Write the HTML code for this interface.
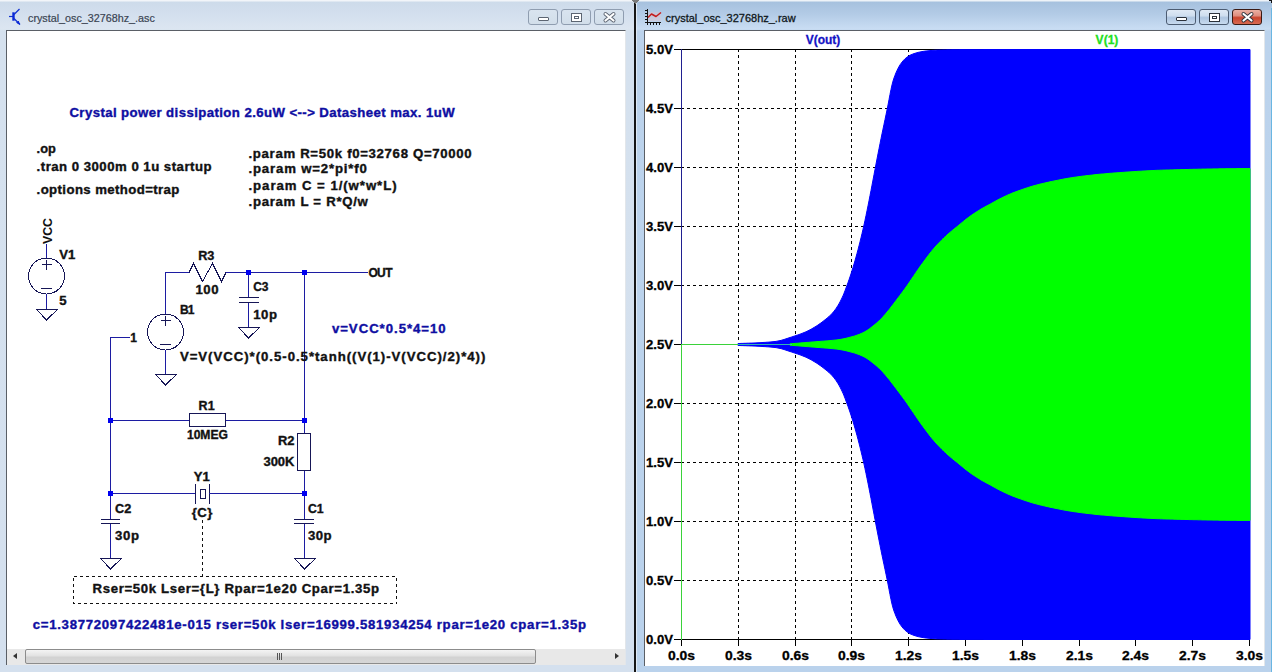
<!DOCTYPE html>
<html><head><meta charset="utf-8"><style>
html,body{margin:0;padding:0;width:1272px;height:672px;overflow:hidden;background:#c7d7e9;font-family:"Liberation Sans", sans-serif;}
.abs{position:absolute}
svg text{font-family:"Liberation Sans", sans-serif;font-weight:bold}
</style></head><body>
<div class="abs" style="left:0;top:0;width:634px;height:672px;background:linear-gradient(#f2f5f9 0px,#f2f5f9 1px,#cddbea 2px,#d3dfee 14px,#dce6f1 29px,#d5e1ee 31px,#d4e0ee 100%)"></div>
<div class="abs" style="left:636px;top:0;width:636px;height:672px;background:linear-gradient(#eef3f8 0px,#eef3f8 1px,#a6c1de 2px,#b3cbe6 14px,#c9ddf3 29px,#bcd3ec 31px,#bad2ec 100%)"></div>
<div class="abs" style="left:1271px;top:8px;width:1px;height:664px;background:#6ab6e2"></div>
<div class="abs" style="left:636px;top:0;width:1px;height:672px;background:#dfe9f4"></div>
<div class="abs" style="left:634px;top:0;width:2px;height:672px;background:#151515"></div>
<div class="abs" style="left:6px;top:30px;width:620px;height:635px;background:#fff;border-left:1px solid #5a5f66;border-top:1px solid #5a5f66;border-right:1px solid #e2e6ea;box-sizing:border-box"></div>
<div class="abs" style="left:644px;top:30px;width:621px;height:636px;background:#fff;border-left:1px solid #5a5f66;border-top:1px solid #5a5f66;border-right:1px solid #e2e6ea;box-sizing:border-box"></div>
<!-- scrollbar -->
<div class="abs" style="left:7px;top:649px;width:618px;height:16px;background:#e8e8e8"></div>
<div class="abs" style="left:25px;top:649px;width:511px;height:15px;border:1px solid #8c8c8c;border-radius:2px;background:linear-gradient(#f4f4f4,#e2e2e2 45%,#d2d2d2 55%,#d6d6d6);box-sizing:border-box"></div>
<div class="abs" style="left:277px;top:653px;width:1px;height:7px;background:#555"></div>
<div class="abs" style="left:279px;top:653px;width:1px;height:7px;background:#555"></div>
<div class="abs" style="left:281px;top:653px;width:1px;height:7px;background:#555"></div>
<div class="abs" style="left:13px;top:653px;width:0;height:0;border-top:3.5px solid transparent;border-bottom:3.5px solid transparent;border-right:4px solid #333"></div>
<div class="abs" style="left:615px;top:653px;width:0;height:0;border-top:3.5px solid transparent;border-bottom:3.5px solid transparent;border-left:4px solid #333"></div>
<!-- titles -->


<div style="position:absolute;left:528px;top:9px;border:1px solid #8f9db0;border-radius:3px;background:linear-gradient(#d9e4ef 0%,#d2deea 100%);box-sizing:border-box;width:30px;height:16px"><div style="position:absolute;left:9px;top:7px;width:9px;height:2px;background:#fff;border:1px solid #5c6572;border-radius:1px"></div></div><div style="position:absolute;left:561px;top:9px;border:1px solid #8f9db0;border-radius:3px;background:linear-gradient(#d9e4ef 0%,#d2deea 100%);box-sizing:border-box;width:30px;height:16px"><div style="position:absolute;left:9px;top:3px;width:9px;height:7px;background:#fff;border:1px solid #5c6572;"><div style="position:absolute;left:2px;top:2px;width:5px;height:3px;background:#5c6572"></div><div style="position:absolute;left:3px;top:3px;width:3px;height:1px;background:#fff"></div></div></div><div style="position:absolute;left:594px;top:9px;border:1px solid #8f9db0;border-radius:3px;background:linear-gradient(#d9e4ef 0%,#d2deea 100%);box-sizing:border-box;width:30px;height:16px"><svg style="position:absolute;left:0;top:0" width="30" height="16"><g stroke-linecap="round"><path d="M10.5,4 L18.5,10.5 M18.5,4 L10.5,10.5" stroke="#5c6572" stroke-width="4"/><path d="M10.5,4 L18.5,10.5 M18.5,4 L10.5,10.5" stroke="#fff" stroke-width="2.2"/></g></svg></div>
<div style="position:absolute;left:1166px;top:9px;border:1px solid #4c5c72;border-radius:3px;background:linear-gradient(#dfe9f5 0%,#cfdeef 40%,#aec5e0 55%,#c8dbef 100%);box-sizing:border-box;width:30px;height:16px"><div style="position:absolute;left:9px;top:7px;width:9px;height:2px;background:#fff;border:1px solid #2c323c;border-radius:1px"></div></div><div style="position:absolute;left:1199px;top:9px;border:1px solid #4c5c72;border-radius:3px;background:linear-gradient(#dfe9f5 0%,#cfdeef 40%,#aec5e0 55%,#c8dbef 100%);box-sizing:border-box;width:30px;height:16px"><div style="position:absolute;left:9px;top:3px;width:9px;height:7px;background:#fff;border:1px solid #2c323c;"><div style="position:absolute;left:2px;top:2px;width:5px;height:3px;background:#2c323c"></div><div style="position:absolute;left:3px;top:3px;width:3px;height:1px;background:#fff"></div></div></div><div style="position:absolute;left:1232px;top:9px;border:1px solid #3a1a14;border-radius:3px;background:linear-gradient(#eab0a4 0%,#df8e80 40%,#c9442e 55%,#d86a52 100%);box-sizing:border-box;width:30px;height:16px"><svg style="position:absolute;left:0;top:0" width="30" height="16"><g stroke-linecap="round"><path d="M10.5,4 L18.5,10.5 M18.5,4 L10.5,10.5" stroke="#2c323c" stroke-width="4"/><path d="M10.5,4 L18.5,10.5 M18.5,4 L10.5,10.5" stroke="#fff" stroke-width="2.2"/></g></svg></div>
<svg class="abs" style="left:0;top:0" width="1272" height="672" viewBox="0 0 1272 672" shape-rendering="crispEdges">
<!-- icons -->
<g fill="none" shape-rendering="auto"><line x1="9" y1="16.5" x2="13" y2="16.5" stroke="#1030d0" stroke-width="1.2"/><rect x="12.3" y="12.3" width="2.4" height="8.4" fill="#0a28d8"/><line x1="14" y1="14.5" x2="19.5" y2="9" stroke="#1030d0" stroke-width="1.2"/><line x1="14" y1="18.5" x2="20" y2="24.5" stroke="#1030d0" stroke-width="1.2"/><path d="M16.5,22.5 L19.5,24.2 L18.2,21" fill="#0a28d8" stroke="#0a28d8" stroke-width="1"/></g>
<rect x="648" y="12" width="13" height="9" fill="#e8c0c4" opacity="0.35"/>
<g fill="#111"><rect x="647" y="9" width="1" height="15"/><rect x="645" y="22" width="16" height="1"/>
<rect x="645" y="10" width="2" height="1"/><rect x="645" y="13" width="2" height="1"/><rect x="645" y="16" width="2" height="1"/><rect x="645" y="19" width="2" height="1"/>
<rect x="650" y="23" width="1" height="2"/><rect x="653" y="23" width="1" height="2"/><rect x="656" y="23" width="1" height="2"/><rect x="659" y="23" width="1" height="2"/><rect x="647" y="23" width="1" height="2"/></g>
<polyline points="648,17.5 651.5,14 656,16.5 661,12.5" stroke="#c41c1c" stroke-width="1.5" fill="none" shape-rendering="auto" stroke-linejoin="round"/>
<polygon points="631,0 639,0 635,4" fill="#7a7a7a"/>
<rect x="1269" y="0" width="3" height="1" fill="#111"/><rect x="1271" y="1" width="1" height="2" fill="#111"/>
</svg>
<svg class="abs" style="left:0;top:0" width="1272" height="672" viewBox="0 0 1272 672">
<defs><clipPath id="cl"><rect x="7" y="31" width="618" height="618"/></clipPath></defs>
<g clip-path="url(#cl)" shape-rendering="crispEdges">
<line x1="46.5" y1="244" x2="46.5" y2="258" stroke="#1c1ca2" stroke-width="1" /><circle cx="46.5" cy="276" r="18" stroke="#161656" fill="none" stroke-width="1"/><line x1="42" y1="264.5" x2="52" y2="264.5" stroke="#161656" stroke-width="1" /><line x1="46.5" y1="260" x2="46.5" y2="270" stroke="#161656" stroke-width="1" /><line x1="41" y1="288.5" x2="52" y2="288.5" stroke="#161656" stroke-width="1" /><line x1="46.5" y1="294" x2="46.5" y2="309" stroke="#1c1ca2" stroke-width="1" /><polygon points="36.5,309.5 57.5,309.5 46.5,320" stroke="#161656" fill="none" stroke-width="1"/><line x1="165.5" y1="272" x2="165.5" y2="314" stroke="#1c1ca2" stroke-width="1" /><circle cx="165.5" cy="332" r="18" stroke="#161656" fill="none" stroke-width="1"/><line x1="161" y1="320.5" x2="171" y2="320.5" stroke="#161656" stroke-width="1" /><line x1="165.5" y1="316" x2="165.5" y2="326" stroke="#161656" stroke-width="1" /><line x1="160" y1="344.5" x2="171" y2="344.5" stroke="#161656" stroke-width="1" /><line x1="165.5" y1="350" x2="165.5" y2="374" stroke="#1c1ca2" stroke-width="1" /><polygon points="155.5,374.5 176.5,374.5 165.5,385" stroke="#161656" fill="none" stroke-width="1"/><line x1="165" y1="272.5" x2="189" y2="272.5" stroke="#1c1ca2" stroke-width="1" /><polyline points="189,272.5 193.5,263.5 202.5,281.5 212.5,263.5 221.5,281.5 226,272.5" stroke="#161656" fill="none" stroke-width="1"/><line x1="226" y1="272.5" x2="368" y2="272.5" stroke="#1c1ca2" stroke-width="1" /><line x1="248.5" y1="272" x2="248.5" y2="297" stroke="#1c1ca2" stroke-width="1" /><line x1="239" y1="297.5" x2="259" y2="297.5" stroke="#161656" stroke-width="1" /><line x1="239" y1="302.5" x2="259" y2="302.5" stroke="#161656" stroke-width="1" /><line x1="248.5" y1="303" x2="248.5" y2="327" stroke="#1c1ca2" stroke-width="1" /><polygon points="238.5,327.5 259.5,327.5 248.5,338" stroke="#161656" fill="none" stroke-width="1"/><line x1="304.5" y1="272" x2="304.5" y2="433" stroke="#1c1ca2" stroke-width="1" /><rect x="297.5" y="433.5" width="13" height="37" stroke="#161656" fill="none"/><line x1="304.5" y1="471" x2="304.5" y2="519" stroke="#1c1ca2" stroke-width="1" /><line x1="294" y1="519.5" x2="314" y2="519.5" stroke="#161656" stroke-width="1" /><line x1="294" y1="523.5" x2="314" y2="523.5" stroke="#161656" stroke-width="1" /><line x1="304.5" y1="524" x2="304.5" y2="558" stroke="#1c1ca2" stroke-width="1" /><polygon points="294.5,558.5 315.5,558.5 304.5,569" stroke="#161656" fill="none" stroke-width="1"/><line x1="110" y1="337.5" x2="130" y2="337.5" stroke="#1c1ca2" stroke-width="1" /><line x1="110.5" y1="337" x2="110.5" y2="519" stroke="#1c1ca2" stroke-width="1" /><line x1="101" y1="519.5" x2="120" y2="519.5" stroke="#161656" stroke-width="1" /><line x1="101" y1="523.5" x2="120" y2="523.5" stroke="#161656" stroke-width="1" /><line x1="110.5" y1="524" x2="110.5" y2="558" stroke="#1c1ca2" stroke-width="1" /><polygon points="100.5,558.5 121.5,558.5 110.5,569" stroke="#161656" fill="none" stroke-width="1"/><line x1="110" y1="420.5" x2="189" y2="420.5" stroke="#1c1ca2" stroke-width="1" /><rect x="189.5" y="413.5" width="36" height="13" stroke="#161656" fill="none"/><line x1="226" y1="420.5" x2="304" y2="420.5" stroke="#1c1ca2" stroke-width="1" /><line x1="110" y1="493.5" x2="195" y2="493.5" stroke="#1c1ca2" stroke-width="1" /><line x1="195.5" y1="484" x2="195.5" y2="504" stroke="#161656" stroke-width="1" /><line x1="209.5" y1="484" x2="209.5" y2="504" stroke="#161656" stroke-width="1" /><rect x="200.5" y="489.5" width="5" height="9" stroke="#161656" fill="none"/><line x1="209" y1="493.5" x2="304" y2="493.5" stroke="#1c1ca2" stroke-width="1" /><rect x="246" y="270" width="5" height="5" fill="#0000f0"/><rect x="302" y="270" width="5" height="5" fill="#0000f0"/><rect x="108" y="418" width="5" height="5" fill="#0000f0"/><rect x="302" y="418" width="5" height="5" fill="#0000f0"/><rect x="108" y="491" width="5" height="5" fill="#0000f0"/><rect x="302" y="491" width="5" height="5" fill="#0000f0"/><line x1="202.5" y1="520" x2="202.5" y2="576" stroke="#111" stroke-width="1" stroke-dasharray="3,3"/><rect x="73.5" y="576.5" width="323" height="27" stroke="#111" fill="none" stroke-dasharray="3,3"/><text transform="translate(69.4,116.6) scale(1.1000,1)" fill="#0e0ea2" stroke="#0e0ea2" stroke-width="0.35" font-size="12" text-anchor="start" textLength="350.27" lengthAdjust="spacing" >Crystal power dissipation 2.6uW &lt;--&gt; Datasheet max. 1uW</text><text transform="translate(36.6,153.1) scale(1.0670,1)" fill="#111111" stroke="#111111" stroke-width="0.35" font-size="12" text-anchor="start" textLength="17.99" lengthAdjust="spacing" >.op</text><text transform="translate(36.6,171.1) scale(1.1000,1)" fill="#111111" stroke="#111111" stroke-width="0.35" font-size="12" text-anchor="start" textLength="159.00" lengthAdjust="spacing" >.tran 0 3000m 0 1u startup</text><text transform="translate(36.6,194.1) scale(1.1000,1)" fill="#111111" stroke="#111111" stroke-width="0.35" font-size="12" text-anchor="start" textLength="129.82" lengthAdjust="spacing" >.options method=trap</text><text transform="translate(248.5,157.6) scale(1.1000,1)" fill="#111111" stroke="#111111" stroke-width="0.35" font-size="12" text-anchor="start" textLength="202.91" lengthAdjust="spacing" >.param R=50k f0=32768 Q=70000</text><text transform="translate(248.5,173.29999999999998) scale(1.1000,1)" fill="#111111" stroke="#111111" stroke-width="0.35" font-size="12" text-anchor="start" textLength="107.55" lengthAdjust="spacing" >.param w=2*pi*f0</text><text transform="translate(248.5,189.9) scale(1.1000,1)" fill="#111111" stroke="#111111" stroke-width="0.35" font-size="12" text-anchor="start" textLength="134.64" lengthAdjust="spacing" >.param C = 1/(w*w*L)</text><text transform="translate(248.5,206.0) scale(1.1000,1)" fill="#111111" stroke="#111111" stroke-width="0.35" font-size="12" text-anchor="start" textLength="108.55" lengthAdjust="spacing" >.param L = R*Q/w</text><text x="0" y="0" fill="#111111" font-size="12" textLength="26" lengthAdjust="spacingAndGlyphs" transform="translate(51.5,244) rotate(-90)">VCC</text><text transform="translate(59.3,259.20000000000005) scale(1.0969,1)" fill="#111111" stroke="#111111" stroke-width="0.35" font-size="12" text-anchor="start" textLength="14.68" lengthAdjust="spacing" >V1</text><text transform="translate(59.3,304.6) scale(1.1000,1)" fill="#111111" stroke="#111111" stroke-width="0.35" font-size="12" text-anchor="start" textLength="6.82" lengthAdjust="spacing" >5</text><text transform="translate(198.2,260.3) scale(1.0561,1)" fill="#111111" stroke="#111111" stroke-width="0.35" font-size="12" text-anchor="start" textLength="15.34" lengthAdjust="spacing" >R3</text><text transform="translate(195.4,294.20000000000005) scale(1.1000,1)" fill="#111111" stroke="#111111" stroke-width="0.35" font-size="12" text-anchor="start" textLength="21.18" lengthAdjust="spacing" >100</text><text transform="translate(253.2,291.1) scale(1.0000,1)" fill="#111111" stroke="#111111" stroke-width="0.35" font-size="12" text-anchor="start" textLength="15.30" lengthAdjust="spacing" >C3</text><text transform="translate(253.2,319.3) scale(1.1000,1)" fill="#111111" stroke="#111111" stroke-width="0.35" font-size="12" text-anchor="start" textLength="21.64" lengthAdjust="spacing" >10p</text><text transform="translate(179.9,314.20000000000005) scale(1.0000,1)" fill="#111111" stroke="#111111" stroke-width="0.35" font-size="12" text-anchor="start" textLength="14.60" lengthAdjust="spacing" >B1</text><text transform="translate(130.2,342.1) scale(1.0000,1)" fill="#111111" stroke="#111111" stroke-width="0.35" font-size="12" text-anchor="start" textLength="6.50" lengthAdjust="spacing" >1</text><text transform="translate(179.9,360.90000000000003) scale(1.1000,1)" fill="#111111" stroke="#111111" stroke-width="0.35" font-size="12" text-anchor="start" textLength="277.64" lengthAdjust="spacing" >V=V(VCC)*(0.5-0.5*tanh((V(1)-V(VCC)/2)*4))</text><text transform="translate(331.9,332.6) scale(1.1000,1)" fill="#0e0ea2" stroke="#0e0ea2" stroke-width="0.35" font-size="12" text-anchor="start" textLength="103.45" lengthAdjust="spacing" >v=VCC*0.5*4=10</text><text transform="translate(368.4,277.3) scale(1.0000,1)" fill="#111111" stroke="#111111" stroke-width="0.35" font-size="12" text-anchor="start" textLength="24.10" lengthAdjust="spacing" >OUT</text><text transform="translate(198.6,410.1) scale(1.0431,1)" fill="#111111" stroke="#111111" stroke-width="0.35" font-size="12" text-anchor="start" textLength="15.34" lengthAdjust="spacing" >R1</text><text transform="translate(186.9,439.1) scale(1.0103,1)" fill="#111111" stroke="#111111" stroke-width="0.35" font-size="12" text-anchor="start" textLength="40.68" lengthAdjust="spacing" >10MEG</text><text transform="translate(278,444.8) scale(1.0757,1)" fill="#111111" stroke="#111111" stroke-width="0.35" font-size="12" text-anchor="start" textLength="15.34" lengthAdjust="spacing" >R2</text><text transform="translate(263.4,465.8) scale(1.0842,1)" fill="#111111" stroke="#111111" stroke-width="0.35" font-size="12" text-anchor="start" textLength="28.69" lengthAdjust="spacing" >300K</text><text transform="translate(193.75,481.20000000000005) scale(1.0901,1)" fill="#111111" stroke="#111111" stroke-width="0.35" font-size="12" text-anchor="start" textLength="14.68" lengthAdjust="spacing" >Y1</text><text transform="translate(191.7,516.6) scale(1.1000,1)" fill="#111111" stroke="#111111" stroke-width="0.35" font-size="12" text-anchor="start" textLength="18.91" lengthAdjust="spacing" >{C}</text><text transform="translate(115,512.6) scale(1.0561,1)" fill="#111111" stroke="#111111" stroke-width="0.35" font-size="12" text-anchor="start" textLength="15.34" lengthAdjust="spacing" >C2</text><text transform="translate(115,540.0) scale(1.1000,1)" fill="#111111" stroke="#111111" stroke-width="0.35" font-size="12" text-anchor="start" textLength="21.82" lengthAdjust="spacing" >30p</text><text transform="translate(307.9,512.6) scale(1.0235,1)" fill="#111111" stroke="#111111" stroke-width="0.35" font-size="12" text-anchor="start" textLength="15.34" lengthAdjust="spacing" >C1</text><text transform="translate(307.9,540.2) scale(1.1000,1)" fill="#111111" stroke="#111111" stroke-width="0.35" font-size="12" text-anchor="start" textLength="21.55" lengthAdjust="spacing" >30p</text><text transform="translate(92.5,593.3000000000001) scale(1.1000,1)" fill="#111111" stroke="#111111" stroke-width="0.35" font-size="12" text-anchor="start" textLength="260.45" lengthAdjust="spacing" >Rser=50k Lser={L} Rpar=1e20 Cpar=1.35p</text><text transform="translate(32.7,628.5) scale(1.1000,1)" fill="#0e0ea2" stroke="#0e0ea2" stroke-width="0.35" font-size="12" text-anchor="start" textLength="503.00" lengthAdjust="spacing" >c=1.38772097422481e-015 rser=50k lser=16999.581934254 rpar=1e20 cpar=1.35p</text>
</g>
<line x1="738.5" y1="49" x2="738.5" y2="639" stroke="#000" stroke-dasharray="3,3"/><line x1="795.5" y1="49" x2="795.5" y2="639" stroke="#000" stroke-dasharray="3,3"/><line x1="851.5" y1="49" x2="851.5" y2="639" stroke="#000" stroke-dasharray="3,3"/><line x1="908.5" y1="49" x2="908.5" y2="639" stroke="#000" stroke-dasharray="3,3"/><line x1="965.5" y1="49" x2="965.5" y2="639" stroke="#000" stroke-dasharray="3,3"/><line x1="1022.5" y1="49" x2="1022.5" y2="639" stroke="#000" stroke-dasharray="3,3"/><line x1="1079.5" y1="49" x2="1079.5" y2="639" stroke="#000" stroke-dasharray="3,3"/><line x1="1135.5" y1="49" x2="1135.5" y2="639" stroke="#000" stroke-dasharray="3,3"/><line x1="1192.5" y1="49" x2="1192.5" y2="639" stroke="#000" stroke-dasharray="3,3"/><line x1="1249.5" y1="49" x2="1249.5" y2="639" stroke="#000" stroke-dasharray="3,3"/><line x1="681" y1="108.5" x2="1250" y2="108.5" stroke="#000" stroke-dasharray="3,3"/><line x1="681" y1="167.5" x2="1250" y2="167.5" stroke="#000" stroke-dasharray="3,3"/><line x1="681" y1="226.5" x2="1250" y2="226.5" stroke="#000" stroke-dasharray="3,3"/><line x1="681" y1="285.5" x2="1250" y2="285.5" stroke="#000" stroke-dasharray="3,3"/><line x1="681" y1="344.5" x2="1250" y2="344.5" stroke="#000" stroke-dasharray="3,3"/><line x1="681" y1="403.5" x2="1250" y2="403.5" stroke="#000" stroke-dasharray="3,3"/><line x1="681" y1="462.5" x2="1250" y2="462.5" stroke="#000" stroke-dasharray="3,3"/><line x1="681" y1="521.5" x2="1250" y2="521.5" stroke="#000" stroke-dasharray="3,3"/><line x1="681" y1="580.5" x2="1250" y2="580.5" stroke="#000" stroke-dasharray="3,3"/><line x1="674" y1="49.5" x2="1250" y2="49.5" stroke="#000" stroke-width="1"/><line x1="674" y1="639.5" x2="1250" y2="639.5" stroke="#000" stroke-width="1"/><polygon points="738.0,343.5 739.0,343.5 740.0,343.5 741.0,343.4 742.0,343.4 743.0,343.4 744.0,343.3 745.0,343.3 746.0,343.3 747.0,343.2 748.0,343.2 749.0,343.2 750.0,343.1 751.0,343.1 752.0,343.1 753.0,343.0 754.0,343.0 755.0,342.9 756.0,342.9 757.0,342.8 758.0,342.8 759.0,342.7 760.0,342.7 761.0,342.6 762.0,342.6 763.0,342.5 764.0,342.4 765.0,342.4 766.0,342.3 767.0,342.2 768.0,342.2 769.0,342.1 770.0,342.0 771.0,341.9 772.0,341.8 773.0,341.7 774.0,341.6 775.0,341.5 776.0,341.4 777.0,341.2 778.0,341.0 779.0,340.8 780.0,340.6 781.0,340.4 782.0,340.1 783.0,339.8 784.0,339.5 785.0,339.2 786.0,338.8 787.0,338.5 788.0,338.2 789.0,337.8 790.0,337.5 791.0,337.2 792.0,336.9 793.0,336.5 794.0,336.2 795.0,335.9 796.0,335.5 797.0,335.2 798.0,334.9 799.0,334.5 800.0,334.2 801.0,333.8 802.0,333.4 803.0,333.0 804.0,332.6 805.0,332.2 806.0,331.8 807.0,331.3 808.0,330.8 809.0,330.3 810.0,329.8 811.0,329.3 812.0,328.7 813.0,328.1 814.0,327.5 815.0,326.9 816.0,326.3 817.0,325.7 818.0,325.0 819.0,324.3 820.0,323.6 821.0,322.9 822.0,322.1 823.0,321.4 824.0,320.6 825.0,319.8 826.0,319.0 827.0,318.2 828.0,317.4 829.0,316.5 830.0,315.5 831.0,314.5 832.0,313.5 833.0,312.3 834.0,311.2 835.0,309.9 836.0,308.5 837.0,307.0 838.0,305.4 839.0,303.7 840.0,301.9 841.0,299.9 842.0,297.9 843.0,295.7 844.0,293.3 845.0,290.7 846.0,288.0 847.0,285.3 848.0,282.6 849.0,279.7 850.0,276.8 851.0,273.8 852.0,270.6 853.0,267.4 854.0,264.1 855.0,260.6 856.0,257.1 857.0,253.4 858.0,249.7 859.0,245.8 860.0,241.9 861.0,237.8 862.0,233.6 863.0,229.3 864.0,224.9 865.0,220.3 866.0,215.6 867.0,210.7 868.0,205.8 869.0,200.8 870.0,195.6 871.0,190.5 872.0,185.2 873.0,180.0 874.0,174.7 875.0,169.4 876.0,164.1 877.0,159.0 878.0,153.8 879.0,148.8 880.0,143.7 881.0,138.7 882.0,133.8 883.0,129.1 884.0,124.3 885.0,119.6 886.0,114.8 887.0,110.0 888.0,105.0 889.0,99.7 890.0,94.4 891.0,89.4 892.0,84.9 893.0,81.1 894.0,78.0 895.0,75.3 896.0,72.7 897.0,70.5 898.0,68.4 899.0,66.6 900.0,64.9 901.0,63.4 902.0,62.1 903.0,60.9 904.0,59.8 905.0,58.8 906.0,58.0 907.0,57.2 908.0,56.5 909.0,55.9 910.0,55.3 911.0,54.8 912.0,54.4 913.0,54.0 914.0,53.6 915.0,53.3 916.0,53.0 917.0,52.7 918.0,52.4 919.0,52.2 920.0,52.0 921.0,51.8 922.0,51.6 923.0,51.4 924.0,51.3 925.0,51.1 926.0,51.0 927.0,50.9 928.0,50.8 929.0,50.7 930.0,50.6 931.0,50.5 932.0,50.4 933.0,50.4 934.0,50.3 935.0,50.2 936.0,50.2 937.0,50.1 938.0,50.1 939.0,50.1 940.0,50.0 941.0,50.0 942.0,50.0 943.0,49.9 944.0,49.9 945.0,49.9 946.0,49.9 947.0,49.8 948.0,49.8 949.0,49.8 950.0,49.8 951.0,49.8 952.0,49.7 953.0,49.7 954.0,49.7 955.0,49.7 956.0,49.7 957.0,49.7 958.0,49.7 959.0,49.7 960.0,49.6 961.0,49.6 962.0,49.6 963.0,49.6 964.0,49.6 965.0,49.6 966.0,49.6 967.0,49.6 968.0,49.6 969.0,49.6 970.0,49.6 971.0,49.6 972.0,49.6 973.0,49.6 974.0,49.6 975.0,49.6 976.0,49.6 977.0,49.6 978.0,49.6 979.0,49.6 980.0,49.6 981.0,49.6 982.0,49.6 983.0,49.6 984.0,49.5 985.0,49.5 986.0,49.5 987.0,49.5 988.0,49.5 989.0,49.5 990.0,49.5 991.0,49.5 992.0,49.5 993.0,49.5 994.0,49.5 995.0,49.5 996.0,49.5 997.0,49.5 998.0,49.5 999.0,49.5 1000.0,49.5 1001.0,49.5 1002.0,49.5 1003.0,49.5 1004.0,49.5 1005.0,49.5 1006.0,49.5 1007.0,49.5 1008.0,49.5 1009.0,49.5 1010.0,49.5 1011.0,49.5 1012.0,49.5 1013.0,49.5 1014.0,49.5 1015.0,49.5 1016.0,49.5 1017.0,49.5 1018.0,49.5 1019.0,49.5 1020.0,49.5 1021.0,49.5 1022.0,49.5 1023.0,49.5 1024.0,49.5 1025.0,49.5 1026.0,49.5 1027.0,49.5 1028.0,49.5 1029.0,49.5 1030.0,49.5 1031.0,49.5 1032.0,49.5 1033.0,49.5 1034.0,49.5 1035.0,49.5 1036.0,49.5 1037.0,49.5 1038.0,49.5 1039.0,49.5 1040.0,49.5 1041.0,49.5 1042.0,49.5 1043.0,49.5 1044.0,49.5 1045.0,49.5 1046.0,49.5 1047.0,49.5 1048.0,49.5 1049.0,49.5 1050.0,49.5 1051.0,49.5 1052.0,49.5 1053.0,49.5 1054.0,49.5 1055.0,49.5 1056.0,49.5 1057.0,49.5 1058.0,49.5 1059.0,49.5 1060.0,49.5 1061.0,49.5 1062.0,49.5 1063.0,49.5 1064.0,49.5 1065.0,49.5 1066.0,49.5 1067.0,49.5 1068.0,49.5 1069.0,49.5 1070.0,49.5 1071.0,49.5 1072.0,49.5 1073.0,49.5 1074.0,49.5 1075.0,49.5 1076.0,49.5 1077.0,49.5 1078.0,49.5 1079.0,49.5 1080.0,49.5 1081.0,49.5 1082.0,49.5 1083.0,49.5 1084.0,49.5 1085.0,49.5 1086.0,49.5 1087.0,49.5 1088.0,49.5 1089.0,49.5 1090.0,49.5 1091.0,49.5 1092.0,49.5 1093.0,49.5 1094.0,49.5 1095.0,49.5 1096.0,49.5 1097.0,49.5 1098.0,49.5 1099.0,49.5 1100.0,49.5 1101.0,49.5 1102.0,49.5 1103.0,49.5 1104.0,49.5 1105.0,49.5 1106.0,49.5 1107.0,49.5 1108.0,49.5 1109.0,49.5 1110.0,49.5 1111.0,49.5 1112.0,49.5 1113.0,49.5 1114.0,49.5 1115.0,49.5 1116.0,49.5 1117.0,49.5 1118.0,49.5 1119.0,49.5 1120.0,49.5 1121.0,49.5 1122.0,49.5 1123.0,49.5 1124.0,49.5 1125.0,49.5 1126.0,49.5 1127.0,49.5 1128.0,49.5 1129.0,49.5 1130.0,49.5 1131.0,49.5 1132.0,49.5 1133.0,49.5 1134.0,49.5 1135.0,49.5 1136.0,49.5 1137.0,49.5 1138.0,49.5 1139.0,49.5 1140.0,49.5 1141.0,49.5 1142.0,49.5 1143.0,49.5 1144.0,49.5 1145.0,49.5 1146.0,49.5 1147.0,49.5 1148.0,49.5 1149.0,49.5 1150.0,49.5 1151.0,49.5 1152.0,49.5 1153.0,49.5 1154.0,49.5 1155.0,49.5 1156.0,49.5 1157.0,49.5 1158.0,49.5 1159.0,49.5 1160.0,49.5 1161.0,49.5 1162.0,49.5 1163.0,49.5 1164.0,49.5 1165.0,49.5 1166.0,49.5 1167.0,49.5 1168.0,49.5 1169.0,49.5 1170.0,49.5 1171.0,49.5 1172.0,49.5 1173.0,49.5 1174.0,49.5 1175.0,49.5 1176.0,49.5 1177.0,49.5 1178.0,49.5 1179.0,49.5 1180.0,49.5 1181.0,49.5 1182.0,49.5 1183.0,49.5 1184.0,49.5 1185.0,49.5 1186.0,49.5 1187.0,49.5 1188.0,49.5 1189.0,49.5 1190.0,49.5 1191.0,49.5 1192.0,49.5 1193.0,49.5 1194.0,49.5 1195.0,49.5 1196.0,49.5 1197.0,49.5 1198.0,49.5 1199.0,49.5 1200.0,49.5 1201.0,49.5 1202.0,49.5 1203.0,49.5 1204.0,49.5 1205.0,49.5 1206.0,49.5 1207.0,49.5 1208.0,49.5 1209.0,49.5 1210.0,49.5 1211.0,49.5 1212.0,49.5 1213.0,49.5 1214.0,49.5 1215.0,49.5 1216.0,49.5 1217.0,49.5 1218.0,49.5 1219.0,49.5 1220.0,49.5 1221.0,49.5 1222.0,49.5 1223.0,49.5 1224.0,49.5 1225.0,49.5 1226.0,49.5 1227.0,49.5 1228.0,49.5 1229.0,49.5 1230.0,49.5 1231.0,49.5 1232.0,49.5 1233.0,49.5 1234.0,49.5 1235.0,49.5 1236.0,49.5 1237.0,49.5 1238.0,49.5 1239.0,49.5 1240.0,49.5 1241.0,49.5 1242.0,49.5 1243.0,49.5 1244.0,49.5 1245.0,49.5 1246.0,49.5 1247.0,49.5 1248.0,49.5 1249.0,49.5 1250.0,49.5 1250.0,639.5 1249.0,639.5 1248.0,639.5 1247.0,639.5 1246.0,639.5 1245.0,639.5 1244.0,639.5 1243.0,639.5 1242.0,639.5 1241.0,639.5 1240.0,639.5 1239.0,639.5 1238.0,639.5 1237.0,639.5 1236.0,639.5 1235.0,639.5 1234.0,639.5 1233.0,639.5 1232.0,639.5 1231.0,639.5 1230.0,639.5 1229.0,639.5 1228.0,639.5 1227.0,639.5 1226.0,639.5 1225.0,639.5 1224.0,639.5 1223.0,639.5 1222.0,639.5 1221.0,639.5 1220.0,639.5 1219.0,639.5 1218.0,639.5 1217.0,639.5 1216.0,639.5 1215.0,639.5 1214.0,639.5 1213.0,639.5 1212.0,639.5 1211.0,639.5 1210.0,639.5 1209.0,639.5 1208.0,639.5 1207.0,639.5 1206.0,639.5 1205.0,639.5 1204.0,639.5 1203.0,639.5 1202.0,639.5 1201.0,639.5 1200.0,639.5 1199.0,639.5 1198.0,639.5 1197.0,639.5 1196.0,639.5 1195.0,639.5 1194.0,639.5 1193.0,639.5 1192.0,639.5 1191.0,639.5 1190.0,639.5 1189.0,639.5 1188.0,639.5 1187.0,639.5 1186.0,639.5 1185.0,639.5 1184.0,639.5 1183.0,639.5 1182.0,639.5 1181.0,639.5 1180.0,639.5 1179.0,639.5 1178.0,639.5 1177.0,639.5 1176.0,639.5 1175.0,639.5 1174.0,639.5 1173.0,639.5 1172.0,639.5 1171.0,639.5 1170.0,639.5 1169.0,639.5 1168.0,639.5 1167.0,639.5 1166.0,639.5 1165.0,639.5 1164.0,639.5 1163.0,639.5 1162.0,639.5 1161.0,639.5 1160.0,639.5 1159.0,639.5 1158.0,639.5 1157.0,639.5 1156.0,639.5 1155.0,639.5 1154.0,639.5 1153.0,639.5 1152.0,639.5 1151.0,639.5 1150.0,639.5 1149.0,639.5 1148.0,639.5 1147.0,639.5 1146.0,639.5 1145.0,639.5 1144.0,639.5 1143.0,639.5 1142.0,639.5 1141.0,639.5 1140.0,639.5 1139.0,639.5 1138.0,639.5 1137.0,639.5 1136.0,639.5 1135.0,639.5 1134.0,639.5 1133.0,639.5 1132.0,639.5 1131.0,639.5 1130.0,639.5 1129.0,639.5 1128.0,639.5 1127.0,639.5 1126.0,639.5 1125.0,639.5 1124.0,639.5 1123.0,639.5 1122.0,639.5 1121.0,639.5 1120.0,639.5 1119.0,639.5 1118.0,639.5 1117.0,639.5 1116.0,639.5 1115.0,639.5 1114.0,639.5 1113.0,639.5 1112.0,639.5 1111.0,639.5 1110.0,639.5 1109.0,639.5 1108.0,639.5 1107.0,639.5 1106.0,639.5 1105.0,639.5 1104.0,639.5 1103.0,639.5 1102.0,639.5 1101.0,639.5 1100.0,639.5 1099.0,639.5 1098.0,639.5 1097.0,639.5 1096.0,639.5 1095.0,639.5 1094.0,639.5 1093.0,639.5 1092.0,639.5 1091.0,639.5 1090.0,639.5 1089.0,639.5 1088.0,639.5 1087.0,639.5 1086.0,639.5 1085.0,639.5 1084.0,639.5 1083.0,639.5 1082.0,639.5 1081.0,639.5 1080.0,639.5 1079.0,639.5 1078.0,639.5 1077.0,639.5 1076.0,639.5 1075.0,639.5 1074.0,639.5 1073.0,639.5 1072.0,639.5 1071.0,639.5 1070.0,639.5 1069.0,639.5 1068.0,639.5 1067.0,639.5 1066.0,639.5 1065.0,639.5 1064.0,639.5 1063.0,639.5 1062.0,639.5 1061.0,639.5 1060.0,639.5 1059.0,639.5 1058.0,639.5 1057.0,639.5 1056.0,639.5 1055.0,639.5 1054.0,639.5 1053.0,639.5 1052.0,639.5 1051.0,639.5 1050.0,639.5 1049.0,639.5 1048.0,639.5 1047.0,639.5 1046.0,639.5 1045.0,639.5 1044.0,639.5 1043.0,639.5 1042.0,639.5 1041.0,639.5 1040.0,639.5 1039.0,639.5 1038.0,639.5 1037.0,639.5 1036.0,639.5 1035.0,639.5 1034.0,639.5 1033.0,639.5 1032.0,639.5 1031.0,639.5 1030.0,639.5 1029.0,639.5 1028.0,639.5 1027.0,639.5 1026.0,639.5 1025.0,639.5 1024.0,639.5 1023.0,639.5 1022.0,639.5 1021.0,639.5 1020.0,639.5 1019.0,639.5 1018.0,639.5 1017.0,639.5 1016.0,639.5 1015.0,639.5 1014.0,639.5 1013.0,639.5 1012.0,639.5 1011.0,639.5 1010.0,639.5 1009.0,639.5 1008.0,639.5 1007.0,639.5 1006.0,639.5 1005.0,639.5 1004.0,639.5 1003.0,639.5 1002.0,639.5 1001.0,639.5 1000.0,639.5 999.0,639.5 998.0,639.5 997.0,639.5 996.0,639.5 995.0,639.5 994.0,639.5 993.0,639.5 992.0,639.5 991.0,639.5 990.0,639.5 989.0,639.5 988.0,639.5 987.0,639.5 986.0,639.5 985.0,639.5 984.0,639.5 983.0,639.4 982.0,639.4 981.0,639.4 980.0,639.4 979.0,639.4 978.0,639.4 977.0,639.4 976.0,639.4 975.0,639.4 974.0,639.4 973.0,639.4 972.0,639.4 971.0,639.4 970.0,639.4 969.0,639.4 968.0,639.4 967.0,639.4 966.0,639.4 965.0,639.4 964.0,639.4 963.0,639.4 962.0,639.4 961.0,639.4 960.0,639.4 959.0,639.3 958.0,639.3 957.0,639.3 956.0,639.3 955.0,639.3 954.0,639.3 953.0,639.3 952.0,639.3 951.0,639.2 950.0,639.2 949.0,639.2 948.0,639.2 947.0,639.2 946.0,639.1 945.0,639.1 944.0,639.1 943.0,639.1 942.0,639.0 941.0,639.0 940.0,639.0 939.0,638.9 938.0,638.9 937.0,638.9 936.0,638.8 935.0,638.8 934.0,638.7 933.0,638.6 932.0,638.6 931.0,638.5 930.0,638.4 929.0,638.3 928.0,638.2 927.0,638.1 926.0,638.0 925.0,637.9 924.0,637.7 923.0,637.6 922.0,637.4 921.0,637.2 920.0,637.0 919.0,636.8 918.0,636.6 917.0,636.3 916.0,636.0 915.0,635.7 914.0,635.4 913.0,635.0 912.0,634.6 911.0,634.2 910.0,633.7 909.0,633.1 908.0,632.5 907.0,631.8 906.0,631.0 905.0,630.2 904.0,629.2 903.0,628.1 902.0,626.9 901.0,625.6 900.0,624.1 899.0,622.4 898.0,620.6 897.0,618.5 896.0,616.3 895.0,613.7 894.0,611.0 893.0,607.9 892.0,604.1 891.0,599.6 890.0,594.6 889.0,589.3 888.0,584.0 887.0,579.0 886.0,574.2 885.0,569.4 884.0,564.7 883.0,559.9 882.0,555.2 881.0,550.3 880.0,545.3 879.0,540.2 878.0,535.2 877.0,530.0 876.0,524.9 875.0,519.6 874.0,514.3 873.0,509.0 872.0,503.8 871.0,498.5 870.0,493.4 869.0,488.2 868.0,483.2 867.0,478.3 866.0,473.4 865.0,468.7 864.0,464.1 863.0,459.7 862.0,455.4 861.0,451.2 860.0,447.1 859.0,443.2 858.0,439.3 857.0,435.6 856.0,431.9 855.0,428.4 854.0,424.9 853.0,421.6 852.0,418.4 851.0,415.2 850.0,412.2 849.0,409.3 848.0,406.4 847.0,403.7 846.0,401.0 845.0,398.3 844.0,395.7 843.0,393.3 842.0,391.1 841.0,389.1 840.0,387.1 839.0,385.3 838.0,383.6 837.0,382.0 836.0,380.5 835.0,379.1 834.0,377.8 833.0,376.7 832.0,375.5 831.0,374.5 830.0,373.5 829.0,372.5 828.0,371.6 827.0,370.8 826.0,370.0 825.0,369.2 824.0,368.4 823.0,367.6 822.0,366.9 821.0,366.1 820.0,365.4 819.0,364.7 818.0,364.0 817.0,363.3 816.0,362.7 815.0,362.1 814.0,361.5 813.0,360.9 812.0,360.3 811.0,359.7 810.0,359.2 809.0,358.7 808.0,358.2 807.0,357.7 806.0,357.2 805.0,356.8 804.0,356.4 803.0,356.0 802.0,355.6 801.0,355.2 800.0,354.8 799.0,354.5 798.0,354.1 797.0,353.8 796.0,353.5 795.0,353.1 794.0,352.8 793.0,352.5 792.0,352.1 791.0,351.8 790.0,351.5 789.0,351.2 788.0,350.8 787.0,350.5 786.0,350.2 785.0,349.8 784.0,349.5 783.0,349.2 782.0,348.9 781.0,348.6 780.0,348.4 779.0,348.2 778.0,348.0 777.0,347.8 776.0,347.6 775.0,347.5 774.0,347.4 773.0,347.3 772.0,347.2 771.0,347.1 770.0,347.0 769.0,346.9 768.0,346.8 767.0,346.8 766.0,346.7 765.0,346.6 764.0,346.6 763.0,346.5 762.0,346.4 761.0,346.4 760.0,346.3 759.0,346.3 758.0,346.2 757.0,346.2 756.0,346.1 755.0,346.1 754.0,346.0 753.0,346.0 752.0,345.9 751.0,345.9 750.0,345.9 749.0,345.8 748.0,345.8 747.0,345.8 746.0,345.7 745.0,345.7 744.0,345.7 743.0,345.6 742.0,345.6 741.0,345.6 740.0,345.5 739.0,345.5 738.0,345.5" fill="#0000ff" stroke="#0000ff" stroke-width="1"/><polygon points="790.0,343.8 791.0,343.7 792.0,343.7 793.0,343.6 794.0,343.5 795.0,343.4 796.0,343.3 797.0,343.3 798.0,343.2 799.0,343.1 800.0,343.0 801.0,342.9 802.0,342.8 803.0,342.8 804.0,342.7 805.0,342.6 806.0,342.5 807.0,342.4 808.0,342.4 809.0,342.3 810.0,342.2 811.0,342.1 812.0,342.0 813.0,341.9 814.0,341.9 815.0,341.8 816.0,341.7 817.0,341.6 818.0,341.5 819.0,341.5 820.0,341.4 821.0,341.3 822.0,341.2 823.0,341.2 824.0,341.1 825.0,341.0 826.0,340.9 827.0,340.9 828.0,340.8 829.0,340.7 830.0,340.6 831.0,340.5 832.0,340.4 833.0,340.3 834.0,340.2 835.0,340.1 836.0,340.0 837.0,339.9 838.0,339.7 839.0,339.6 840.0,339.5 841.0,339.3 842.0,339.1 843.0,338.9 844.0,338.7 845.0,338.5 846.0,338.3 847.0,338.0 848.0,337.8 849.0,337.5 850.0,337.2 851.0,337.0 852.0,336.7 853.0,336.4 854.0,336.2 855.0,335.9 856.0,335.5 857.0,335.2 858.0,334.8 859.0,334.5 860.0,334.1 861.0,333.6 862.0,333.2 863.0,332.7 864.0,332.2 865.0,331.7 866.0,331.1 867.0,330.5 868.0,329.8 869.0,329.1 870.0,328.4 871.0,327.6 872.0,326.8 873.0,326.0 874.0,325.2 875.0,324.4 876.0,323.6 877.0,322.7 878.0,321.8 879.0,320.9 880.0,319.9 881.0,318.9 882.0,317.9 883.0,316.8 884.0,315.6 885.0,314.5 886.0,313.3 887.0,312.1 888.0,310.9 889.0,309.7 890.0,308.4 891.0,307.1 892.0,305.8 893.0,304.5 894.0,303.2 895.0,301.9 896.0,300.6 897.0,299.2 898.0,297.9 899.0,296.6 900.0,295.3 901.0,293.9 902.0,292.6 903.0,291.2 904.0,289.9 905.0,288.5 906.0,287.1 907.0,285.7 908.0,284.2 909.0,282.8 910.0,281.3 911.0,279.8 912.0,278.3 913.0,276.9 914.0,275.4 915.0,273.9 916.0,272.4 917.0,271.0 918.0,269.5 919.0,268.1 920.0,266.6 921.0,265.2 922.0,263.9 923.0,262.5 924.0,261.1 925.0,259.8 926.0,258.4 927.0,257.1 928.0,255.8 929.0,254.4 930.0,253.1 931.0,251.9 932.0,250.6 933.0,249.4 934.0,248.3 935.0,247.1 936.0,246.0 937.0,244.9 938.0,243.8 939.0,242.8 940.0,241.8 941.0,240.7 942.0,239.7 943.0,238.8 944.0,237.8 945.0,236.9 946.0,235.9 947.0,235.0 948.0,234.1 949.0,233.3 950.0,232.4 951.0,231.6 952.0,230.7 953.0,229.9 954.0,229.1 955.0,228.3 956.0,227.5 957.0,226.7 958.0,225.9 959.0,225.0 960.0,224.2 961.0,223.4 962.0,222.6 963.0,221.8 964.0,220.9 965.0,220.1 966.0,219.3 967.0,218.6 968.0,217.8 969.0,217.1 970.0,216.3 971.0,215.6 972.0,214.9 973.0,214.2 974.0,213.6 975.0,212.9 976.0,212.3 977.0,211.6 978.0,211.0 979.0,210.4 980.0,209.7 981.0,209.1 982.0,208.5 983.0,208.0 984.0,207.4 985.0,206.9 986.0,206.3 987.0,205.8 988.0,205.3 989.0,204.7 990.0,204.2 991.0,203.7 992.0,203.1 993.0,202.5 994.0,202.0 995.0,201.4 996.0,200.9 997.0,200.3 998.0,199.8 999.0,199.3 1000.0,198.7 1001.0,198.3 1002.0,197.8 1003.0,197.3 1004.0,196.8 1005.0,196.3 1006.0,195.9 1007.0,195.4 1008.0,194.9 1009.0,194.5 1010.0,194.1 1011.0,193.7 1012.0,193.2 1013.0,192.8 1014.0,192.5 1015.0,192.1 1016.0,191.7 1017.0,191.3 1018.0,191.0 1019.0,190.6 1020.0,190.3 1021.0,189.9 1022.0,189.6 1023.0,189.2 1024.0,188.9 1025.0,188.5 1026.0,188.2 1027.0,187.9 1028.0,187.6 1029.0,187.2 1030.0,186.9 1031.0,186.6 1032.0,186.3 1033.0,186.0 1034.0,185.7 1035.0,185.5 1036.0,185.2 1037.0,184.9 1038.0,184.7 1039.0,184.4 1040.0,184.1 1041.0,183.9 1042.0,183.7 1043.0,183.4 1044.0,183.2 1045.0,183.0 1046.0,182.7 1047.0,182.5 1048.0,182.3 1049.0,182.1 1050.0,181.8 1051.0,181.6 1052.0,181.4 1053.0,181.2 1054.0,181.0 1055.0,180.8 1056.0,180.6 1057.0,180.4 1058.0,180.2 1059.0,180.0 1060.0,179.8 1061.0,179.6 1062.0,179.4 1063.0,179.2 1064.0,179.0 1065.0,178.8 1066.0,178.7 1067.0,178.5 1068.0,178.3 1069.0,178.1 1070.0,178.0 1071.0,177.8 1072.0,177.7 1073.0,177.5 1074.0,177.3 1075.0,177.2 1076.0,177.1 1077.0,176.9 1078.0,176.8 1079.0,176.6 1080.0,176.5 1081.0,176.4 1082.0,176.2 1083.0,176.1 1084.0,176.0 1085.0,175.9 1086.0,175.7 1087.0,175.6 1088.0,175.5 1089.0,175.4 1090.0,175.3 1091.0,175.2 1092.0,175.1 1093.0,175.0 1094.0,174.8 1095.0,174.7 1096.0,174.6 1097.0,174.5 1098.0,174.4 1099.0,174.3 1100.0,174.2 1101.0,174.1 1102.0,174.0 1103.0,174.0 1104.0,173.9 1105.0,173.8 1106.0,173.7 1107.0,173.6 1108.0,173.5 1109.0,173.4 1110.0,173.3 1111.0,173.3 1112.0,173.2 1113.0,173.1 1114.0,173.0 1115.0,172.9 1116.0,172.9 1117.0,172.8 1118.0,172.7 1119.0,172.7 1120.0,172.6 1121.0,172.5 1122.0,172.4 1123.0,172.4 1124.0,172.3 1125.0,172.2 1126.0,172.1 1127.0,172.1 1128.0,172.0 1129.0,171.9 1130.0,171.9 1131.0,171.8 1132.0,171.7 1133.0,171.7 1134.0,171.6 1135.0,171.5 1136.0,171.5 1137.0,171.4 1138.0,171.3 1139.0,171.3 1140.0,171.2 1141.0,171.2 1142.0,171.1 1143.0,171.0 1144.0,171.0 1145.0,170.9 1146.0,170.9 1147.0,170.8 1148.0,170.8 1149.0,170.7 1150.0,170.7 1151.0,170.6 1152.0,170.6 1153.0,170.5 1154.0,170.5 1155.0,170.4 1156.0,170.4 1157.0,170.3 1158.0,170.3 1159.0,170.3 1160.0,170.2 1161.0,170.2 1162.0,170.2 1163.0,170.1 1164.0,170.1 1165.0,170.1 1166.0,170.0 1167.0,170.0 1168.0,170.0 1169.0,170.0 1170.0,169.9 1171.0,169.9 1172.0,169.9 1173.0,169.9 1174.0,169.8 1175.0,169.8 1176.0,169.8 1177.0,169.7 1178.0,169.7 1179.0,169.7 1180.0,169.7 1181.0,169.6 1182.0,169.6 1183.0,169.6 1184.0,169.6 1185.0,169.5 1186.0,169.5 1187.0,169.5 1188.0,169.5 1189.0,169.4 1190.0,169.4 1191.0,169.4 1192.0,169.4 1193.0,169.3 1194.0,169.3 1195.0,169.3 1196.0,169.3 1197.0,169.3 1198.0,169.2 1199.0,169.2 1200.0,169.2 1201.0,169.2 1202.0,169.1 1203.0,169.1 1204.0,169.1 1205.0,169.1 1206.0,169.1 1207.0,169.0 1208.0,169.0 1209.0,169.0 1210.0,169.0 1211.0,169.0 1212.0,169.0 1213.0,168.9 1214.0,168.9 1215.0,168.9 1216.0,168.9 1217.0,168.9 1218.0,168.9 1219.0,168.8 1220.0,168.8 1221.0,168.8 1222.0,168.8 1223.0,168.8 1224.0,168.8 1225.0,168.8 1226.0,168.7 1227.0,168.7 1228.0,168.7 1229.0,168.7 1230.0,168.7 1231.0,168.7 1232.0,168.7 1233.0,168.7 1234.0,168.7 1235.0,168.7 1236.0,168.7 1237.0,168.6 1238.0,168.6 1239.0,168.6 1240.0,168.6 1241.0,168.6 1242.0,168.6 1243.0,168.6 1244.0,168.6 1245.0,168.6 1246.0,168.6 1247.0,168.6 1248.0,168.6 1249.0,168.6 1250.0,168.6 1250.0,520.4 1249.0,520.4 1248.0,520.4 1247.0,520.4 1246.0,520.4 1245.0,520.4 1244.0,520.4 1243.0,520.4 1242.0,520.4 1241.0,520.4 1240.0,520.4 1239.0,520.4 1238.0,520.4 1237.0,520.4 1236.0,520.3 1235.0,520.3 1234.0,520.3 1233.0,520.3 1232.0,520.3 1231.0,520.3 1230.0,520.3 1229.0,520.3 1228.0,520.3 1227.0,520.3 1226.0,520.3 1225.0,520.2 1224.0,520.2 1223.0,520.2 1222.0,520.2 1221.0,520.2 1220.0,520.2 1219.0,520.2 1218.0,520.1 1217.0,520.1 1216.0,520.1 1215.0,520.1 1214.0,520.1 1213.0,520.1 1212.0,520.0 1211.0,520.0 1210.0,520.0 1209.0,520.0 1208.0,520.0 1207.0,520.0 1206.0,519.9 1205.0,519.9 1204.0,519.9 1203.0,519.9 1202.0,519.9 1201.0,519.8 1200.0,519.8 1199.0,519.8 1198.0,519.8 1197.0,519.7 1196.0,519.7 1195.0,519.7 1194.0,519.7 1193.0,519.7 1192.0,519.6 1191.0,519.6 1190.0,519.6 1189.0,519.6 1188.0,519.5 1187.0,519.5 1186.0,519.5 1185.0,519.5 1184.0,519.4 1183.0,519.4 1182.0,519.4 1181.0,519.4 1180.0,519.3 1179.0,519.3 1178.0,519.3 1177.0,519.3 1176.0,519.2 1175.0,519.2 1174.0,519.2 1173.0,519.1 1172.0,519.1 1171.0,519.1 1170.0,519.1 1169.0,519.0 1168.0,519.0 1167.0,519.0 1166.0,519.0 1165.0,518.9 1164.0,518.9 1163.0,518.9 1162.0,518.8 1161.0,518.8 1160.0,518.8 1159.0,518.7 1158.0,518.7 1157.0,518.7 1156.0,518.6 1155.0,518.6 1154.0,518.5 1153.0,518.5 1152.0,518.4 1151.0,518.4 1150.0,518.3 1149.0,518.3 1148.0,518.2 1147.0,518.2 1146.0,518.1 1145.0,518.1 1144.0,518.0 1143.0,518.0 1142.0,517.9 1141.0,517.8 1140.0,517.8 1139.0,517.7 1138.0,517.7 1137.0,517.6 1136.0,517.5 1135.0,517.5 1134.0,517.4 1133.0,517.3 1132.0,517.3 1131.0,517.2 1130.0,517.1 1129.0,517.1 1128.0,517.0 1127.0,516.9 1126.0,516.9 1125.0,516.8 1124.0,516.7 1123.0,516.6 1122.0,516.6 1121.0,516.5 1120.0,516.4 1119.0,516.3 1118.0,516.3 1117.0,516.2 1116.0,516.1 1115.0,516.1 1114.0,516.0 1113.0,515.9 1112.0,515.8 1111.0,515.7 1110.0,515.7 1109.0,515.6 1108.0,515.5 1107.0,515.4 1106.0,515.3 1105.0,515.2 1104.0,515.1 1103.0,515.0 1102.0,515.0 1101.0,514.9 1100.0,514.8 1099.0,514.7 1098.0,514.6 1097.0,514.5 1096.0,514.4 1095.0,514.3 1094.0,514.2 1093.0,514.0 1092.0,513.9 1091.0,513.8 1090.0,513.7 1089.0,513.6 1088.0,513.5 1087.0,513.4 1086.0,513.3 1085.0,513.1 1084.0,513.0 1083.0,512.9 1082.0,512.8 1081.0,512.6 1080.0,512.5 1079.0,512.4 1078.0,512.2 1077.0,512.1 1076.0,511.9 1075.0,511.8 1074.0,511.7 1073.0,511.5 1072.0,511.3 1071.0,511.2 1070.0,511.0 1069.0,510.9 1068.0,510.7 1067.0,510.5 1066.0,510.3 1065.0,510.2 1064.0,510.0 1063.0,509.8 1062.0,509.6 1061.0,509.4 1060.0,509.2 1059.0,509.0 1058.0,508.8 1057.0,508.6 1056.0,508.4 1055.0,508.2 1054.0,508.0 1053.0,507.8 1052.0,507.6 1051.0,507.4 1050.0,507.2 1049.0,506.9 1048.0,506.7 1047.0,506.5 1046.0,506.3 1045.0,506.0 1044.0,505.8 1043.0,505.6 1042.0,505.3 1041.0,505.1 1040.0,504.9 1039.0,504.6 1038.0,504.3 1037.0,504.1 1036.0,503.8 1035.0,503.5 1034.0,503.3 1033.0,503.0 1032.0,502.7 1031.0,502.4 1030.0,502.1 1029.0,501.8 1028.0,501.4 1027.0,501.1 1026.0,500.8 1025.0,500.5 1024.0,500.1 1023.0,499.8 1022.0,499.4 1021.0,499.1 1020.0,498.7 1019.0,498.4 1018.0,498.0 1017.0,497.7 1016.0,497.3 1015.0,496.9 1014.0,496.5 1013.0,496.2 1012.0,495.8 1011.0,495.3 1010.0,494.9 1009.0,494.5 1008.0,494.1 1007.0,493.6 1006.0,493.1 1005.0,492.7 1004.0,492.2 1003.0,491.7 1002.0,491.2 1001.0,490.7 1000.0,490.3 999.0,489.7 998.0,489.2 997.0,488.7 996.0,488.1 995.0,487.6 994.0,487.0 993.0,486.5 992.0,485.9 991.0,485.3 990.0,484.8 989.0,484.3 988.0,483.7 987.0,483.2 986.0,482.7 985.0,482.1 984.0,481.6 983.0,481.0 982.0,480.5 981.0,479.9 980.0,479.3 979.0,478.6 978.0,478.0 977.0,477.4 976.0,476.7 975.0,476.1 974.0,475.4 973.0,474.8 972.0,474.1 971.0,473.4 970.0,472.7 969.0,471.9 968.0,471.2 967.0,470.4 966.0,469.7 965.0,468.9 964.0,468.1 963.0,467.2 962.0,466.4 961.0,465.6 960.0,464.8 959.0,464.0 958.0,463.1 957.0,462.3 956.0,461.5 955.0,460.7 954.0,459.9 953.0,459.1 952.0,458.3 951.0,457.4 950.0,456.6 949.0,455.7 948.0,454.9 947.0,454.0 946.0,453.1 945.0,452.1 944.0,451.2 943.0,450.2 942.0,449.3 941.0,448.3 940.0,447.2 939.0,446.2 938.0,445.2 937.0,444.1 936.0,443.0 935.0,441.9 934.0,440.7 933.0,439.6 932.0,438.4 931.0,437.1 930.0,435.9 929.0,434.6 928.0,433.2 927.0,431.9 926.0,430.6 925.0,429.2 924.0,427.9 923.0,426.5 922.0,425.1 921.0,423.8 920.0,422.4 919.0,420.9 918.0,419.5 917.0,418.0 916.0,416.6 915.0,415.1 914.0,413.6 913.0,412.1 912.0,410.7 911.0,409.2 910.0,407.7 909.0,406.2 908.0,404.8 907.0,403.3 906.0,401.9 905.0,400.5 904.0,399.1 903.0,397.8 902.0,396.4 901.0,395.1 900.0,393.7 899.0,392.4 898.0,391.1 897.0,389.8 896.0,388.4 895.0,387.1 894.0,385.8 893.0,384.5 892.0,383.2 891.0,381.9 890.0,380.6 889.0,379.3 888.0,378.1 887.0,376.9 886.0,375.7 885.0,374.5 884.0,373.4 883.0,372.2 882.0,371.1 881.0,370.1 880.0,369.1 879.0,368.1 878.0,367.2 877.0,366.3 876.0,365.4 875.0,364.6 874.0,363.8 873.0,363.0 872.0,362.2 871.0,361.4 870.0,360.6 869.0,359.9 868.0,359.2 867.0,358.5 866.0,357.9 865.0,357.3 864.0,356.8 863.0,356.3 862.0,355.8 861.0,355.4 860.0,354.9 859.0,354.5 858.0,354.2 857.0,353.8 856.0,353.5 855.0,353.1 854.0,352.8 853.0,352.6 852.0,352.3 851.0,352.0 850.0,351.8 849.0,351.5 848.0,351.2 847.0,351.0 846.0,350.7 845.0,350.5 844.0,350.3 843.0,350.1 842.0,349.9 841.0,349.7 840.0,349.5 839.0,349.4 838.0,349.3 837.0,349.1 836.0,349.0 835.0,348.9 834.0,348.8 833.0,348.7 832.0,348.6 831.0,348.5 830.0,348.4 829.0,348.3 828.0,348.2 827.0,348.1 826.0,348.1 825.0,348.0 824.0,347.9 823.0,347.8 822.0,347.8 821.0,347.7 820.0,347.6 819.0,347.5 818.0,347.5 817.0,347.4 816.0,347.3 815.0,347.2 814.0,347.1 813.0,347.1 812.0,347.0 811.0,346.9 810.0,346.8 809.0,346.7 808.0,346.6 807.0,346.6 806.0,346.5 805.0,346.4 804.0,346.3 803.0,346.2 802.0,346.2 801.0,346.1 800.0,346.0 799.0,345.9 798.0,345.8 797.0,345.7 796.0,345.7 795.0,345.6 794.0,345.5 793.0,345.4 792.0,345.3 791.0,345.3 790.0,345.2" fill="#00ff00" stroke="#00ff00" stroke-width="1"/><line x1="681" y1="344.5" x2="738" y2="344.5" stroke="#3ad23a"/><line x1="738" y1="344.5" x2="792" y2="344.5" stroke="#30b8b0"/><line x1="681.5" y1="49" x2="681.5" y2="344" stroke="#202090"/><line x1="681.5" y1="344" x2="681.5" y2="640" stroke="#3ad23a"/><line x1="674" y1="49.5" x2="681" y2="49.5" stroke="#000"/><line x1="674" y1="108.5" x2="681" y2="108.5" stroke="#000"/><line x1="674" y1="167.5" x2="681" y2="167.5" stroke="#000"/><line x1="674" y1="226.5" x2="681" y2="226.5" stroke="#000"/><line x1="674" y1="285.5" x2="681" y2="285.5" stroke="#000"/><line x1="674" y1="344.5" x2="681" y2="344.5" stroke="#000"/><line x1="674" y1="403.5" x2="681" y2="403.5" stroke="#000"/><line x1="674" y1="462.5" x2="681" y2="462.5" stroke="#000"/><line x1="674" y1="521.5" x2="681" y2="521.5" stroke="#000"/><line x1="674" y1="580.5" x2="681" y2="580.5" stroke="#000"/><line x1="674" y1="639.5" x2="681" y2="639.5" stroke="#000"/><line x1="681.5" y1="640" x2="681.5" y2="646" stroke="#000"/><line x1="738.5" y1="640" x2="738.5" y2="646" stroke="#000"/><line x1="795.5" y1="640" x2="795.5" y2="646" stroke="#000"/><line x1="851.5" y1="640" x2="851.5" y2="646" stroke="#000"/><line x1="908.5" y1="640" x2="908.5" y2="646" stroke="#000"/><line x1="965.5" y1="640" x2="965.5" y2="646" stroke="#000"/><line x1="1022.5" y1="640" x2="1022.5" y2="646" stroke="#000"/><line x1="1079.5" y1="640" x2="1079.5" y2="646" stroke="#000"/><line x1="1135.5" y1="640" x2="1135.5" y2="646" stroke="#000"/><line x1="1192.5" y1="640" x2="1192.5" y2="646" stroke="#000"/><line x1="1249.5" y1="640" x2="1249.5" y2="646" stroke="#000"/><text x="646" y="53.7" fill="#000" stroke="#000" stroke-width="0.3" font-size="13" textLength="27" lengthAdjust="spacingAndGlyphs">5.0V</text><text x="646" y="112.7" fill="#000" stroke="#000" stroke-width="0.3" font-size="13" textLength="27" lengthAdjust="spacingAndGlyphs">4.5V</text><text x="646" y="171.7" fill="#000" stroke="#000" stroke-width="0.3" font-size="13" textLength="27" lengthAdjust="spacingAndGlyphs">4.0V</text><text x="646" y="230.7" fill="#000" stroke="#000" stroke-width="0.3" font-size="13" textLength="27" lengthAdjust="spacingAndGlyphs">3.5V</text><text x="646" y="289.7" fill="#000" stroke="#000" stroke-width="0.3" font-size="13" textLength="27" lengthAdjust="spacingAndGlyphs">3.0V</text><text x="646" y="348.7" fill="#000" stroke="#000" stroke-width="0.3" font-size="13" textLength="27" lengthAdjust="spacingAndGlyphs">2.5V</text><text x="646" y="407.7" fill="#000" stroke="#000" stroke-width="0.3" font-size="13" textLength="27" lengthAdjust="spacingAndGlyphs">2.0V</text><text x="646" y="466.7" fill="#000" stroke="#000" stroke-width="0.3" font-size="13" textLength="27" lengthAdjust="spacingAndGlyphs">1.5V</text><text x="646" y="525.7" fill="#000" stroke="#000" stroke-width="0.3" font-size="13" textLength="27" lengthAdjust="spacingAndGlyphs">1.0V</text><text x="646" y="584.7" fill="#000" stroke="#000" stroke-width="0.3" font-size="13" textLength="27" lengthAdjust="spacingAndGlyphs">0.5V</text><text x="646" y="643.7" fill="#000" stroke="#000" stroke-width="0.3" font-size="13" textLength="27" lengthAdjust="spacingAndGlyphs">0.0V</text><text x="668" y="659.5" fill="#000" stroke="#000" stroke-width="0.3" font-size="13" textLength="27" lengthAdjust="spacingAndGlyphs">0.0s</text><text x="725" y="659.5" fill="#000" stroke="#000" stroke-width="0.3" font-size="13" textLength="27" lengthAdjust="spacingAndGlyphs">0.3s</text><text x="782" y="659.5" fill="#000" stroke="#000" stroke-width="0.3" font-size="13" textLength="27" lengthAdjust="spacingAndGlyphs">0.6s</text><text x="838" y="659.5" fill="#000" stroke="#000" stroke-width="0.3" font-size="13" textLength="27" lengthAdjust="spacingAndGlyphs">0.9s</text><text x="895" y="659.5" fill="#000" stroke="#000" stroke-width="0.3" font-size="13" textLength="27" lengthAdjust="spacingAndGlyphs">1.2s</text><text x="952" y="659.5" fill="#000" stroke="#000" stroke-width="0.3" font-size="13" textLength="27" lengthAdjust="spacingAndGlyphs">1.5s</text><text x="1009" y="659.5" fill="#000" stroke="#000" stroke-width="0.3" font-size="13" textLength="27" lengthAdjust="spacingAndGlyphs">1.8s</text><text x="1066" y="659.5" fill="#000" stroke="#000" stroke-width="0.3" font-size="13" textLength="27" lengthAdjust="spacingAndGlyphs">2.1s</text><text x="1122" y="659.5" fill="#000" stroke="#000" stroke-width="0.3" font-size="13" textLength="27" lengthAdjust="spacingAndGlyphs">2.4s</text><text x="1179" y="659.5" fill="#000" stroke="#000" stroke-width="0.3" font-size="13" textLength="27" lengthAdjust="spacingAndGlyphs">2.7s</text><text x="1236" y="659.5" fill="#000" stroke="#000" stroke-width="0.3" font-size="13" textLength="27" lengthAdjust="spacingAndGlyphs">3.0s</text><text x="805.7" y="43.5" fill="#1212c4" stroke="#1212c4" stroke-width="0.3" font-size="12.5" textLength="34.6" lengthAdjust="spacingAndGlyphs">V(out)</text><text x="1095.6" y="43.5" fill="#1ee01e" stroke="#1ee01e" stroke-width="0.3" font-size="12.5" textLength="22.8" lengthAdjust="spacingAndGlyphs">V(1)</text>
<text x="28" y="22" fill="#3a4452" stroke="#3a4452" stroke-width="0.2" font-size="11.5" style="font-weight:normal" textLength="126.8" lengthAdjust="spacingAndGlyphs">crystal_osc_32768hz_.asc</text>
<text x="665.6" y="21.8" fill="#101820" stroke="#101820" stroke-width="0.3" font-size="11.5" style="font-weight:normal" textLength="130" lengthAdjust="spacingAndGlyphs">crystal_osc_32768hz_.raw</text>
</svg>
</body></html>
